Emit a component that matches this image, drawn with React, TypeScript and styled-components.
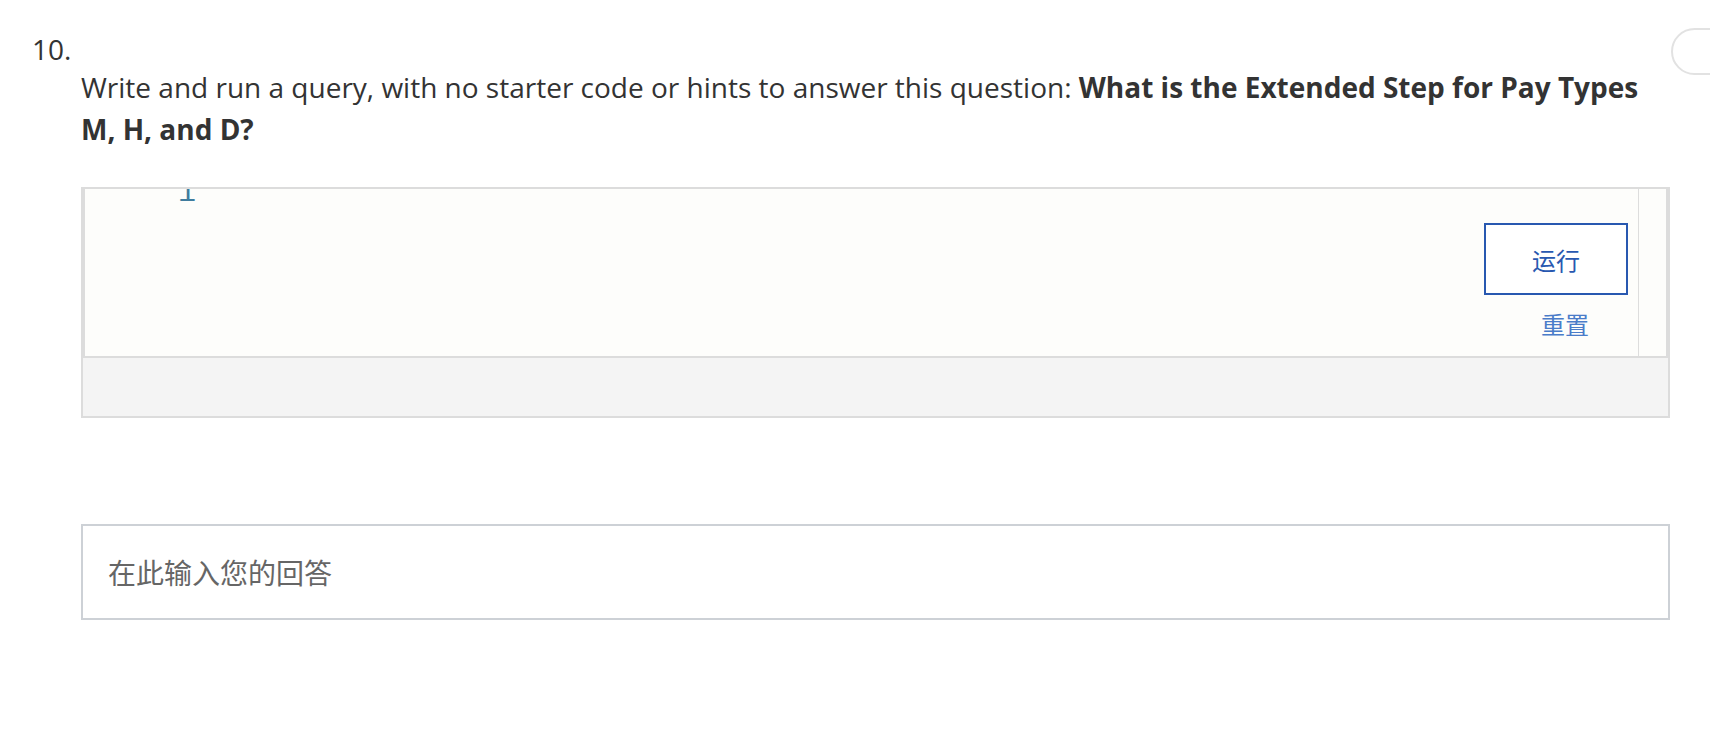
import styled, { createGlobalStyle } from "styled-components";

const GlobalStyle = createGlobalStyle`
    html, body {
        margin: 0;
        padding: 0;
        background: #ffffff;
        overflow: hidden;
    }
    body {
        font-family: "Open Sans", "Noto Sans CJK SC", sans-serif;
        color: #333333;
    }
`;

const Page = styled.div`
    width: 1710px;
    padding-top: 28px;
`;

const Header = styled.div`
    display: flex;
    justify-content: space-between;
    align-items: flex-start;
    padding-left: 32px;
`;

const Number = styled.div`
    font-size: 28px;
    line-height: 34px;
    margin-top: 4px;
`;

const Pill = styled.button`
    width: 80px;
    height: 47px;
    margin-right: -41px;
    margin-bottom: -13px;
    border: 2px solid #e2e2e2;
    border-radius: 24px;
    background: #ffffff;
    padding: 0;
`;

const Content = styled.div`
    margin-left: 81px;
    width: 1589px;
`;

const Question = styled.p`
    margin: 0;
    font-size: 28px;
    line-height: 42px;
    color: #333333;

    strong {
        font-weight: 700;
    }
`;

const EditorBox = styled.div`
    margin-top: 37px;
    border: 2px solid #dcdcdc;
    display: flex;
    flex-direction: column;
`;

const Editor = styled.div`
    display: flex;
    height: 167px;
    background: #fdfdfb;
    border: 2px solid #dcdcdc;
    border-top: none;
`;

const CodeArea = styled.div`
    flex: 1;
    display: flex;
    justify-content: space-between;
    overflow: hidden;
`;

const Gutter = styled.div`
    padding-left: 93px;
`;

const LineNumber = styled.span`
    display: block;
    margin-top: -11px;
    font-family: "Liberation Mono", monospace;
    font-size: 30px;
    line-height: 30px;
    color: #3f7c9e;
`;

const Actions = styled.div`
    display: flex;
    flex-direction: column;
    align-items: center;
    padding-top: 34px;
    margin-right: 10px;
`;

const RunButton = styled.button`
    width: 144px;
    height: 72px;
    border: 2px solid #2858b0;
    background: #ffffff;
    color: #2858b0;
    font-family: "Noto Sans CJK SC", sans-serif;
    font-size: 24px;
    cursor: pointer;
`;

const ResetLink = styled.a`
    margin-top: 11px;
    margin-left: 18px;
    font-family: "Noto Sans CJK SC", sans-serif;
    font-size: 24px;
    line-height: 36px;
    color: #4a7cc9;
    text-decoration: none;
    cursor: pointer;
`;

const Scrollbar = styled.div`
    width: 27px;
    border-left: 1px solid #dddddd;
`;

const Footer = styled.div`
    height: 58px;
    background: #f4f4f4;
`;

const AnswerBox = styled.div`
    margin-top: 106px;
    height: 92px;
    border: 2px solid #cdd1d6;
    display: flex;
    align-items: center;
    padding-left: 25px;
    font-family: "Noto Sans CJK SC", sans-serif;
    font-size: 28px;
    color: #666666;
`;

export default function App() {
    return (
        <Page>
            <GlobalStyle />
            <Header>
                <Number>10.</Number>
                <Pill aria-label="toggle" />
            </Header>
            <Content>
                <Question>
                    Write and run a query, with no starter code or hints to answer this question:{" "}
                    <strong>What is the Extended Step for Pay Types M, H, and D?</strong>
                </Question>
                <EditorBox>
                    <Editor>
                        <CodeArea>
                            <Gutter>
                                <LineNumber>1</LineNumber>
                            </Gutter>
                            <Actions>
                                <RunButton>运行</RunButton>
                                <ResetLink>重置</ResetLink>
                            </Actions>
                        </CodeArea>
                        <Scrollbar />
                    </Editor>
                    <Footer />
                </EditorBox>
                <AnswerBox>在此输入您的回答</AnswerBox>
            </Content>
        </Page>
    );
}
